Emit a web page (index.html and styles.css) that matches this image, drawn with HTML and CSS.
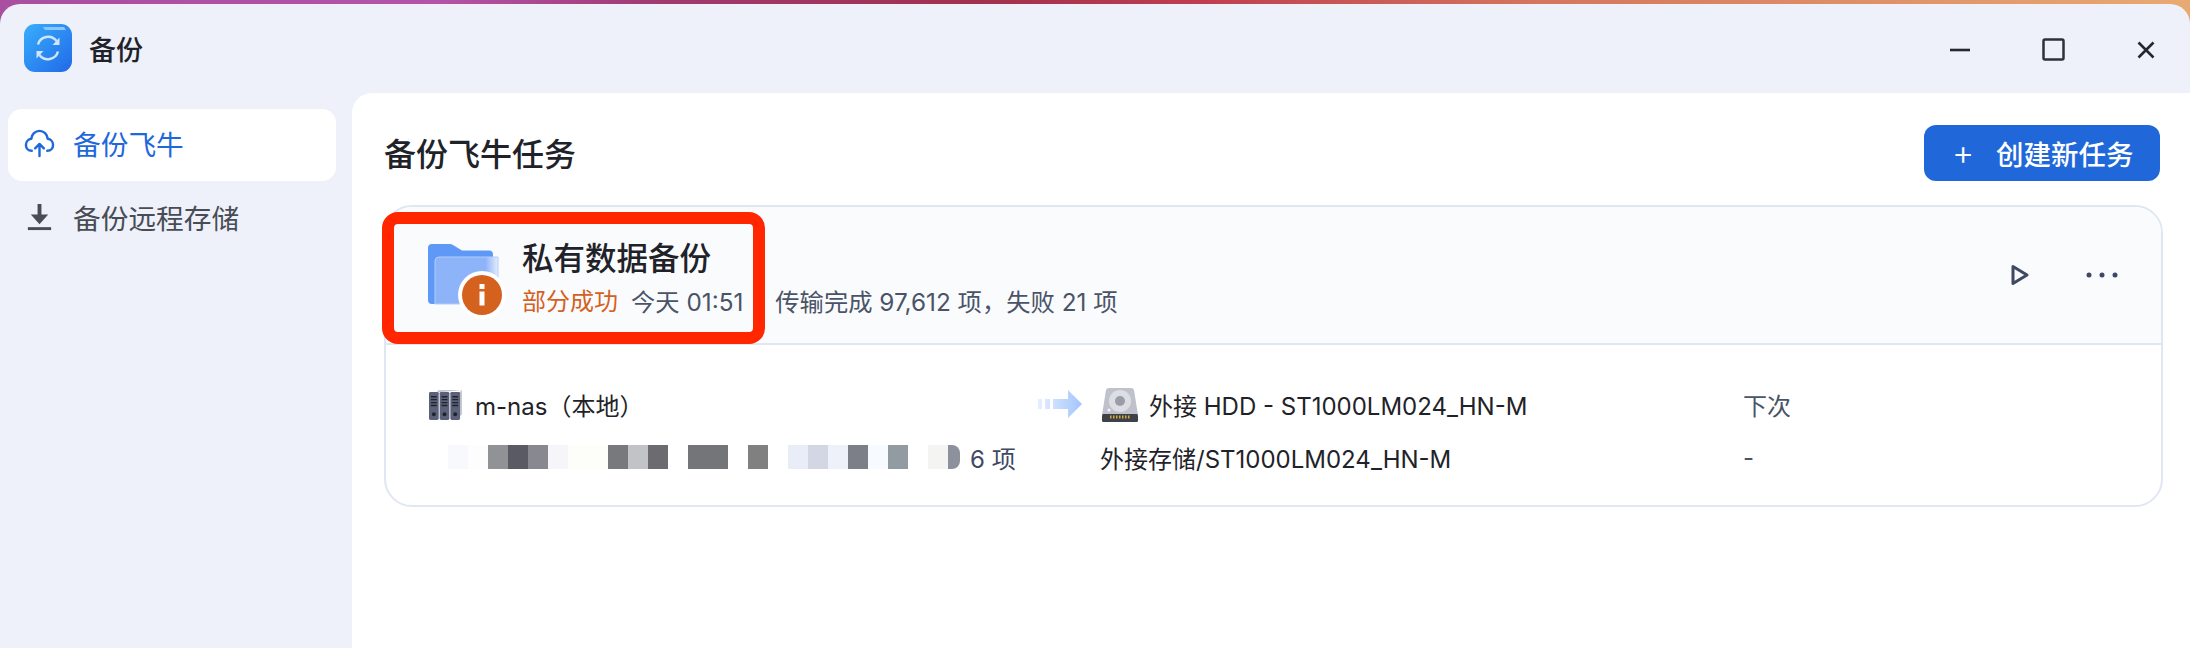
FILE: index.html
```html
<!DOCTYPE html>
<html lang="zh-CN">
<head>
    <meta charset="UTF-8">
    <meta name="viewport" content="width=device-width, initial-scale=1.0">
    <title>备份</title>
    <link rel="stylesheet" href="styles.css">
</head>
<body>
    <div class="window">
        <header class="titlebar">
            <svg class="app-icon" viewBox="0 0 48 48">
                <defs>
                    <linearGradient id="appBg" x1="0" y1="0" x2="1" y2="1">
                        <stop offset="0" stop-color="#38aefc"/>
                        <stop offset="1" stop-color="#2169e8"/>
                    </linearGradient>
                </defs>
                <rect width="48" height="48" rx="11" fill="url(#appBg)"/>
                <path d="M19 3h21l2 3H21z" fill="#8cc6fb"/>
                <path d="M14 20.500a10.500 10.500 0 0 1 18.500-3.500" fill="none" stroke="#cfe6fd" stroke-width="2.500"/>
                <path d="M35.500 13.500v7.500h-7z" fill="#cfe6fd"/>
                <path d="M34 27.500a10.500 10.500 0 0 1-18.500 3.500" fill="none" stroke="#cfe6fd" stroke-width="2.500"/>
                <path d="M12.500 34.500v-7.500h7z" fill="#cfe6fd"/>
            </svg>
            <span class="app-name">备份</span>
            <div class="win-controls">
                <svg class="win-btn" viewBox="0 0 24 24"><path d="M2 12h20" stroke="#23272e" stroke-width="2.600" fill="none"/></svg>
                <svg class="win-btn" viewBox="0 0 24 24"><rect x="2.500" y="1.500" width="20" height="20" rx="1.500" stroke="#2d3138" stroke-width="2.500" fill="none"/></svg>
                <svg class="win-btn" viewBox="0 0 24 24"><path d="M4.500 4.500l15 15M19.500 4.500l-15 15" stroke="#23272e" stroke-width="2.600" fill="none"/></svg>
            </div>
        </header>

        <div class="content">
            <nav class="sidebar">
                <div class="nav-item active">
                    <svg class="nav-icon" viewBox="0 0 32 32" fill="none" stroke="#1f68dc" stroke-width="2.500" stroke-linecap="round" stroke-linejoin="round">
                        <path d="M8 24.500C4 24.500 2 21.500 2 18.500c0-3.500 2.500-6 5.500-6.300C8 7.500 11.500 4 16 4s8 3.500 8.500 8.200c3 .3 5.500 2.800 5.500 6.300 0 3-2 6-6 6"/>
                        <path d="M16 30V18M11.500 22l4.500-4.500 4.500 4.500"/>
                    </svg>
                    <span>备份飞牛</span>
                </div>
                <div class="nav-item">
                    <svg class="nav-icon" viewBox="0 0 32 32">
                        <path d="M14 3h4v11h7l-9 10-9-10h7z" fill="#484c55"/>
                        <rect x="4" y="27" width="24" height="3" fill="#484c55"/>
                    </svg>
                    <span>备份远程存储</span>
                </div>
            </nav>

            <main class="panel">
                <div class="panel-head">
                    <h1>备份飞牛任务</h1>
                    <button class="create-btn"><span class="plus">+</span>创建新任务</button>
                </div>

                <section class="task-card">
                    <div class="task-head">
                        <svg class="folder" viewBox="0 0 70 64">
                            <defs>
                                <linearGradient id="folderFront" x1="0" y1="0" x2="1" y2="0">
                                    <stop offset="0" stop-color="#8db3f9"/>
                                    <stop offset="0.8" stop-color="#8db3f9"/>
                                    <stop offset="1" stop-color="#e4edfd"/>
                                </linearGradient>
                            </defs>
                            <path d="M0 5a4 4 0 0 1 4-4h18a6 6 0 0 1 3 1l9 5.500h27a4 4 0 0 1 4 4V20H7v41H4a4 4 0 0 1-4-4z" fill="#5f99f7"/>
                            <path d="M7 18a4 4 0 0 1 4-4h59v47H7z" fill="url(#folderFront)" stroke="#b4cdfb" stroke-width="1"/>
                            <circle cx="54" cy="52" r="24" fill="#fff"/>
                            <circle cx="54" cy="52" r="20" fill="#d4611d"/>
                            <rect x="51.500" y="41" width="5" height="5" fill="#fff"/>
                            <rect x="51.500" y="48.500" width="5" height="14" fill="#fff"/>
                        </svg>
                        <div class="task-info">
                            <div class="task-name">私有数据备份</div>
                            <div class="task-meta">
                                <span class="status">部分成功</span>
                                <span class="time">今天 01:51</span>
                                <span class="summary">传输完成 97,612 项，失败 21 项</span>
                            </div>
                        </div>
                        <div class="task-actions">
                            <svg class="play" viewBox="0 0 20 24"><path d="M3 3.500v17l14-8.500z" fill="none" stroke="#3f4963" stroke-width="3" stroke-linejoin="round"/></svg>
                            <svg class="more" viewBox="0 0 32 6"><circle cx="3" cy="3" r="2.500" fill="#3f4963"/><circle cx="16" cy="3" r="2.500" fill="#3f4963"/><circle cx="29" cy="3" r="2.500" fill="#3f4963"/></svg>
                        </div>
                    </div>

                    <div class="task-body">
                        <div class="cell">
                            <svg class="nas-icon" viewBox="0 0 36 34">
                                <path d="M8 5l3-3h24l-3 3v25l3-3V2" fill="#c6c9d4"/>
                                <rect x="1" y="4" width="10" height="29" rx="1.500" fill="#5a6178"/>
                                <rect x="12" y="4" width="10" height="29" rx="1.500" fill="#5a6178"/>
                                <rect x="23" y="4" width="10" height="29" rx="1.500" fill="#5a6178"/>
                                <path d="M3 9h6M3 12h6M3 15h6M3 18h6M14 9h6M14 12h6M14 15h6M14 18h6M25 9h6M25 12h6M25 15h6M25 18h6" stroke="#20232c" stroke-width="1.400"/>
                                <circle cx="6" cy="27" r="2" fill="#20232c"/>
                                <circle cx="17" cy="27" r="2" fill="#20232c"/>
                                <circle cx="28" cy="27" r="2" fill="#20232c"/>
                            </svg>
                            <span>m-nas（本地）</span>
                        </div>
                        <svg class="arrow" viewBox="0 0 44 28">
                            <defs>
                                <linearGradient id="arrowFill" x1="0" y1="0" x2="1" y2="0">
                                    <stop offset="0" stop-color="#e6effe"/>
                                    <stop offset="1" stop-color="#a3c5fc"/>
                                </linearGradient>
                            </defs>
                            <path d="M0 9h4v10H0zM7 9h5v10H7zM15 9h15V0l14 14-14 14v-9H15z" fill="url(#arrowFill)"/>
                        </svg>
                        <div class="cell dest-head">
                            <svg class="hdd-icon" viewBox="0 0 36 35">
                                <path d="M4 3a3 3 0 0 1 3-2h22a3 3 0 0 1 3 2l4 25H0z" fill="#bfc2cc"/>
                                <rect x="0" y="27" width="36" height="8" rx="1.500" fill="#3e4148"/>
                                <path d="M8 30h20" stroke="#d5a93a" stroke-width="3" stroke-dasharray="1.500 1.500"/>
                                <circle cx="18" cy="14" r="11" fill="#dcdee4"/>
                                <circle cx="18" cy="14" r="5" fill="#9a9da6"/>
                                <circle cx="7" cy="23" r="1.500" fill="#f4f4f6"/>
                            </svg>
                            <span>外接 HDD - ST1000LM024_HN-M</span>
                        </div>
                        <div class="cell next">下次</div>

                        <div class="cell path">
                            <span class="blurred"></span>
                            <span class="count">6 项</span>
                        </div>
                        <div></div>
                        <div class="cell dest">外接存储/ST1000LM024_HN-M</div>
                        <div class="cell next">-</div>
                    </div>

                    <div class="highlight"></div>
                </section>
            </main>
        </div>
    </div>
</body>
</html>
```

FILE: styles.css
```css
* {
    box-sizing: border-box;
}

html, body {
    height: 100%;
}

body {
    margin: 0;
    overflow: hidden;
    padding-top: 4px;
    font-family: Inter, 'Noto Sans CJK SC', sans-serif;
    color: #1f2329;
    background: linear-gradient(90deg, #a94f9f 0%, #b354a8 20%, #a03a72 30%, #a2304e 45%, #bf3f50 55%, #d4755f 70%, #e8aa72 100%);
}

.window {
    height: 100%;
    display: flex;
    flex-direction: column;
    background-color: #eef1f9;
    border-radius: 20px 20px 0 0;
}

.titlebar {
    height: 89px;
    flex: none;
    display: flex;
    align-items: center;
    padding: 0 24px 2px;
}

.app-icon {
    width: 48px;
    height: 48px;
}

.app-name {
    margin-left: 17px;
    margin-top: 2px;
    font-size: 27px;
    font-weight: 500;
}

.win-controls {
    margin-left: auto;
    margin-top: 4px;
    margin-right: 8px;
    display: flex;
    gap: 69px;
}

.win-btn {
    width: 24px;
    height: 24px;
    display: block;
}

.content {
    flex: 1;
    display: flex;
    min-height: 0;
}

.sidebar {
    width: 352px;
    flex: none;
    padding: 16px 16px 0 8px;
}

.nav-item {
    height: 72px;
    display: flex;
    align-items: center;
    gap: 18px;
    padding-left: 24px;
    padding-bottom: 1px;
    border-radius: 14px;
    font-size: 27.700px;
    color: #484c55;
}

.nav-item.active {
    padding-bottom: 5px;
    background-color: #fff;
    color: #1f68dc;
}

.nav-icon {
    width: 31px;
    height: 31px;
    margin-left: -8px;
    flex: none;
}

.panel {
    flex: 1;
    background-color: #fff;
    border-top-left-radius: 20px;
    padding: 32px 27px 0 32px;
}

.panel-head {
    height: 56px;
    display: flex;
    align-items: center;
    justify-content: space-between;
    margin-right: 3px;
}

.panel-head h1 {
    margin: 0 0 2px;
    font-size: 32px;
    font-weight: 500;
}

.create-btn {
    width: 236px;
    height: 56px;
    display: flex;
    align-items: center;
    padding: 0 0 0 28px;
    border: none;
    border-radius: 12px;
    background-color: #2068da;
    color: #fff;
    font-family: inherit;
    font-size: 27.500px;
    font-weight: 500;
}

.plus {
    width: 44px;
    text-align: left;
    font-size: 34px;
    font-weight: 300;
    line-height: 1;
}

.task-card {
    position: relative;
    margin-top: 24px;
    border: 2px solid #e1e7f2;
    border-radius: 28px;
}

.task-head {
    height: 138px;
    display: flex;
    align-items: center;
    padding: 0 42px;
    background-color: #fafbfd;
    border-bottom: 2px solid #e1e7f2;
    border-radius: 26px 26px 0 0;
}

.folder {
    width: 70px;
    height: 64px;
    flex: none;
    overflow: visible;
}

.task-info {
    margin-left: 24px;
    margin-top: 6px;
}

.task-name {
    font-size: 31.500px;
    font-weight: 500;
    line-height: 44px;
}

.task-meta {
    margin-top: 4px;
    display: flex;
    font-size: 24px;
    line-height: 34px;
    color: #4a5468;
}

.status {
    color: #d4611d;
}

.time {
    margin-left: 13px;
    font-size: 24.300px;
}

.summary {
    margin-left: 32px;
    font-size: 24.300px;
}

.task-actions {
    margin-left: auto;
    margin-right: 1px;
    display: flex;
    align-items: center;
    gap: 56px;
}

.play {
    width: 20px;
    height: 24px;
}

.more {
    width: 32px;
    height: 6px;
}

.task-body {
    display: grid;
    grid-template-columns: 610px 64px 641px 1fr;
    grid-template-rows: 34px 34px;
    row-gap: 19px;
    align-items: center;
    padding: 42px 0 31px 42px;
    font-size: 24px;
}

.cell {
    display: flex;
    align-items: center;
    gap: 12px;
    white-space: nowrap;
}

.nas-icon {
    width: 35px;
    height: 33px;
    flex: none;
}

.hdd-icon {
    width: 36px;
    height: 35px;
    flex: none;
}

.dest-head {
    gap: 11px;
}

.arrow {
    width: 44px;
    height: 28px;
}

.next {
    color: #4a5468;
}

.path {
    padding-left: 20px;
    gap: 10px;
    color: #3f4963;
}

.blurred {
    width: 512px;
    height: 24px;
    border-radius: 0 8px 8px 0;
    background: linear-gradient(90deg,
        #f8f9fd 0 20px, #fdfdfe 20px 40px, #919296 40px 60px, #5a5a64 60px 80px,
        #888890 80px 100px, #f5f5fa 100px 120px, #fdfefa 120px 160px, #78797c 160px 180px,
        #c2c3c7 180px 200px, #6c6b70 200px 220px, #fff 220px 240px, #747578 240px 280px,
        #fff 280px 300px, #808080 300px 320px, #fff 320px 340px, #e9edf8 340px 360px,
        #d3d7e4 360px 380px, #eef1f9 380px 400px, #7c7f87 400px 420px, #f7fafe 420px 440px,
        #929aa2 440px 460px, #fff 460px 480px, #f4f4f2 480px 500px, #8c919c 500px 512px);
}

.dest {
    margin-left: -2px;
}

/* red box drawn over the screenshot */
.highlight {
    position: absolute;
    left: -4px;
    top: 5px;
    width: 383px;
    height: 132px;
    border: 12px solid #ff2600;
    border-radius: 16px;
}
```
